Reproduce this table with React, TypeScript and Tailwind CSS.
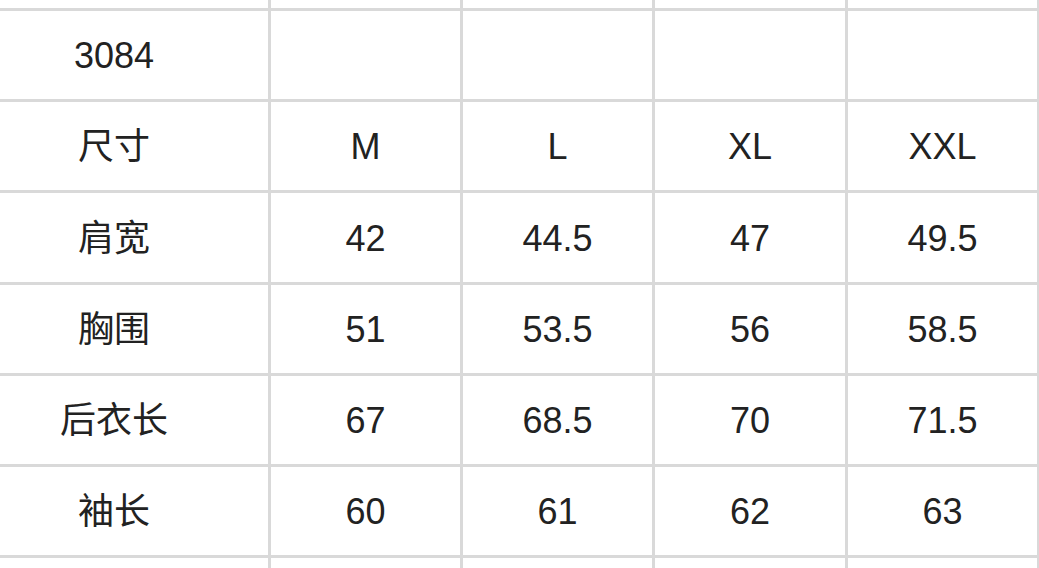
import React from "react";

const rows: string[][] = [
  ["", "", "", "", "", ""],
  ["3084", "", "", "", "", ""],
  ["尺寸", "M", "L", "XL", "XXL", ""],
  ["肩宽", "42", "44.5", "47", "49.5", ""],
  ["胸围", "51", "53.5", "56", "58.5", ""],
  ["后衣长", "67", "68.5", "70", "71.5", ""],
  ["袖长", "60", "61", "62", "63", ""],
  ["", "", "", "", "", ""],
];

const rowHeights = ["h-[8px]", "h-[88px]", "h-[88px]", "h-[89px]", "h-[88px]", "h-[88px]", "h-[88px]", "h-[40px]"];

export default function App() {
  return (
    <div className="w-[1039px] h-[568px] overflow-hidden bg-white">
      <div
        className="ml-[-40px] grid w-max grid-cols-[308px_189px_189px_190px_189px_200px] gap-[3px] bg-[#d9d9d9] text-[36px] leading-none text-[#222222]"
        style={{ fontFamily: '"Liberation Sans", "Noto Sans CJK SC", sans-serif' }}
      >
        {rows.map((row, r) =>
          row.map((cell, c) => (
            <div
              key={`${r}-${c}`}
              className={`${rowHeights[r]} flex items-center justify-center bg-white pt-[2px]`}
            >
              {cell}
            </div>
          ))
        )}
      </div>
    </div>
  );
}
